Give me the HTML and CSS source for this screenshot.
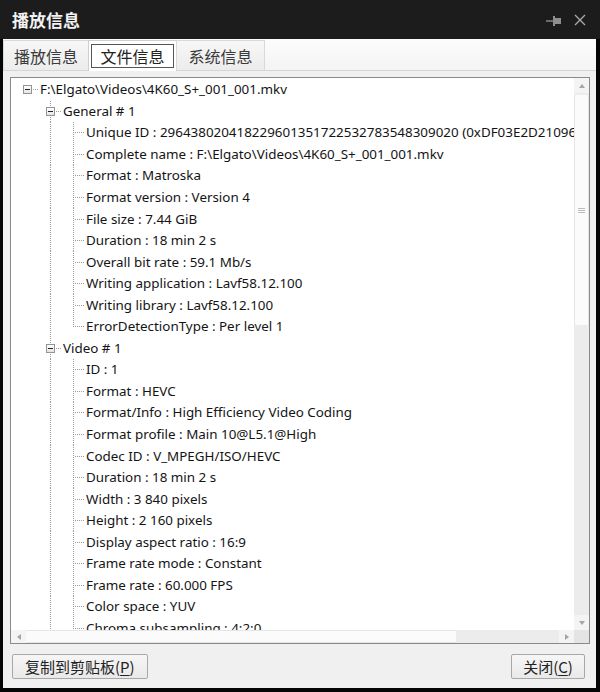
FILE: index.html
```html
<!DOCTYPE html>
<html lang="zh-CN">
<head>
<meta charset="utf-8">
<title>播放信息</title>
<link rel="stylesheet" href="styles.css">
</head>
<body>
<div class="window">
  <div class="titlebar">
    <span class="title">播放信息</span>
    <span class="tb-icons">
      <svg class="pin" width="16" height="12" viewBox="0 0 16 12"><path d="M0 6H7" stroke="#8f8f8f" stroke-width="1.4"/><rect x="7" y="1" width="2" height="10" fill="#8f8f8f"/><rect x="9" y="3" width="6" height="6" fill="#8f8f8f"/></svg>
      <svg class="close" width="12" height="12" viewBox="0 0 12 12"><path d="M1 1L11 11M11 1L1 11" stroke="#a8a8a8" stroke-width="1.4"/></svg>
    </span>
  </div>
  <div class="client">
    <div class="tabs">
      <div class="tab">播放信息</div>
      <div class="tab active"><span class="focus">文件信息</span></div>
      <div class="tab">系统信息</div>
    </div>
    <div class="panel">
      <div class="view">
        <div class="tree">
          <div class="row"><span class="c bx"><i class="box"></i></span><span class="txt">F:\Elgato\Videos\4K60_S+_001_001.mkv</span></div>
          <div class="row"><span class="c"></span><span class="c bxv"><i class="box"></i></span><span class="txt">General # 1</span></div>
          <div class="row"><span class="c"></span><span class="c v"></span><span class="c t"></span><span class="txt">Unique ID : 296438020418229601351722532783548309020 (0xDF03E2D21096163</span></div>
          <div class="row"><span class="c"></span><span class="c v"></span><span class="c t"></span><span class="txt">Complete name : F:\Elgato\Videos\4K60_S+_001_001.mkv</span></div>
          <div class="row"><span class="c"></span><span class="c v"></span><span class="c t"></span><span class="txt">Format : Matroska</span></div>
          <div class="row"><span class="c"></span><span class="c v"></span><span class="c t"></span><span class="txt">Format version : Version 4</span></div>
          <div class="row"><span class="c"></span><span class="c v"></span><span class="c t"></span><span class="txt">File size : 7.44 GiB</span></div>
          <div class="row"><span class="c"></span><span class="c v"></span><span class="c t"></span><span class="txt">Duration : 18 min 2 s</span></div>
          <div class="row"><span class="c"></span><span class="c v"></span><span class="c t"></span><span class="txt">Overall bit rate : 59.1 Mb/s</span></div>
          <div class="row"><span class="c"></span><span class="c v"></span><span class="c t"></span><span class="txt">Writing application : Lavf58.12.100</span></div>
          <div class="row"><span class="c"></span><span class="c v"></span><span class="c t"></span><span class="txt">Writing library : Lavf58.12.100</span></div>
          <div class="row"><span class="c"></span><span class="c v"></span><span class="c l"></span><span class="txt">ErrorDetectionType : Per level 1</span></div>
          <div class="row"><span class="c"></span><span class="c bxv"><i class="box"></i></span><span class="txt">Video # 1</span></div>
          <div class="row"><span class="c"></span><span class="c v"></span><span class="c t"></span><span class="txt">ID : 1</span></div>
          <div class="row"><span class="c"></span><span class="c v"></span><span class="c t"></span><span class="txt">Format : HEVC</span></div>
          <div class="row"><span class="c"></span><span class="c v"></span><span class="c t"></span><span class="txt">Format/Info : High Efficiency Video Coding</span></div>
          <div class="row"><span class="c"></span><span class="c v"></span><span class="c t"></span><span class="txt">Format profile : Main 10@L5.1@High</span></div>
          <div class="row"><span class="c"></span><span class="c v"></span><span class="c t"></span><span class="txt">Codec ID : V_MPEGH/ISO/HEVC</span></div>
          <div class="row"><span class="c"></span><span class="c v"></span><span class="c t"></span><span class="txt">Duration : 18 min 2 s</span></div>
          <div class="row"><span class="c"></span><span class="c v"></span><span class="c t"></span><span class="txt">Width : 3 840 pixels</span></div>
          <div class="row"><span class="c"></span><span class="c v"></span><span class="c t"></span><span class="txt">Height : 2 160 pixels</span></div>
          <div class="row"><span class="c"></span><span class="c v"></span><span class="c t"></span><span class="txt">Display aspect ratio : 16:9</span></div>
          <div class="row"><span class="c"></span><span class="c v"></span><span class="c t"></span><span class="txt">Frame rate mode : Constant</span></div>
          <div class="row"><span class="c"></span><span class="c v"></span><span class="c t"></span><span class="txt">Frame rate : 60.000 FPS</span></div>
          <div class="row"><span class="c"></span><span class="c v"></span><span class="c t"></span><span class="txt">Color space : YUV</span></div>
          <div class="row"><span class="c"></span><span class="c v"></span><span class="c t"></span><span class="txt">Chroma subsampling : 4:2:0</span></div>
        </div>
        <div class="vscroll">
          <span class="arrow up"></span>
          <div class="vtrack">
            <div class="vthumb"><span class="grip"></span></div>
          </div>
          <span class="arrow down"></span>
        </div>
      </div>
      <div class="hscroll">
        <span class="harrow left"></span>
        <div class="htrack"><div class="hthumb"></div></div>
        <span class="harrow right"></span>
        <span class="corner"></span>
      </div>
    </div>
    <div class="footer">
      <button class="btn">复制到剪贴板(<u>P</u>)</button>
      <button class="btn">关闭(<u>C</u>)</button>
    </div>
  </div>
</div>
</body>
</html>
```
FILE: styles.css
```css
* { box-sizing: border-box; }
html, body { margin: 0; padding: 0; background: #000; }
.window {
  width: 600px;
  height: 692px;
  background: #050505;
  padding: 0 4px 4px 3px;
  display: flex;
  flex-direction: column;
  font-family: "Noto Sans", "Noto Sans CJK SC", sans-serif;
}
.titlebar {
  height: 39px;
  flex: none;
  background: #1c1c1c;
  margin: 0 -4px 0 -3px;
  padding: 0 14px 0 12px;
  display: flex;
  align-items: center;
  justify-content: space-between;
}
.title {
  color: #f2f2f2;
  font-family: "Noto Sans CJK SC", sans-serif;
  font-size: 17px;
  font-weight: 700;
}
.tb-icons { display: flex; align-items: center; gap: 12px; }
.pin { margin-top: 2px; }
.client {
  flex: 1;
  background: #f0f0f0;
  display: flex;
  flex-direction: column;
}
.tabs {
  height: 32px;
  flex: none;
  display: flex;
  align-items: flex-end;
  padding-left: 0;
  background: linear-gradient(#fcfcfc, #f4f4f4);
  border-bottom: 1px solid #d6d6d6;
}
.tab {
  height: 30px;
  width: 86px;
  display: flex;
  align-items: center;
  justify-content: center;
  font-family: "Noto Sans CJK SC", sans-serif;
  font-size: 16px;
  color: #3a3a3a;
  border: 1px solid #d9d9d9;
  border-bottom: none;
  background: linear-gradient(#f7f7f7, #ececec);
  margin-right: -1px;
}
.tab:last-child { width: 89px; }
.tab.active {
  height: 31px;
  width: 89px;
  background: #fff;
  border-color: #cfcfcf;
  margin-bottom: -1px;
  color: #222;
}
.focus {
  border: 1px dotted #222;
  outline: 1px solid #555;
  outline-offset: -1px;
  width: 83px;
  height: 24px;
  display: flex;
  align-items: center;
  justify-content: center;
}
.panel {
  margin: 6px 6px 0 7px;
  height: 567px;
  flex: none;
  border: 1px solid #8a8a8a;
  background: #fff;
  display: flex;
  flex-direction: column;
}
.view {
  flex: 1;
  display: flex;
  min-height: 0;
}
.tree {
  flex: 1;
  min-width: 0;
  overflow: hidden;
  padding: 1px 0 0 5px;
  font-size: 13.4px;
  color: #141414;
}
.row {
  height: 21.55px;
  display: flex;
  align-items: center;
  white-space: nowrap;
}
.txt { padding-left: 1px; line-height: 21px; }
.c {
  flex: none;
  width: 23px;
  height: 100%;
  display: flex;
  align-items: center;
  justify-content: center;
  background-repeat: no-repeat;
}
.c.v {
  background-image: repeating-linear-gradient(to bottom, #9a9a9a 0 1px, transparent 1px 2px);
  background-position: 11px 0;
  background-size: 1px 100%;
}
.c.t, .c.bxv {
  background-image: repeating-linear-gradient(to bottom, #9a9a9a 0 1px, transparent 1px 2px),
                    repeating-linear-gradient(to right, #9a9a9a 0 1px, transparent 1px 2px);
  background-position: 11px 0, 13px 50%;
  background-size: 1px 100%, 9px 1px;
}
.c.l {
  background-image: repeating-linear-gradient(to bottom, #9a9a9a 0 1px, transparent 1px 2px),
                    repeating-linear-gradient(to right, #9a9a9a 0 1px, transparent 1px 2px);
  background-position: 11px 0, 13px 50%;
  background-size: 1px 50%, 9px 1px;
}
.c.bx {
  background-image: repeating-linear-gradient(to right, #9a9a9a 0 1px, transparent 1px 2px);
  background-position: 13px 50%;
  background-size: 9px 1px;
}
.box {
  width: 9px;
  height: 9px;
  border: 1px solid #949494;
  background: linear-gradient(#ffffff, #e4e4e4);
  display: flex;
  align-items: center;
  justify-content: center;
}
.box::before {
  content: "";
  width: 5px;
  height: 1px;
  background: #222;
}
.vscroll {
  width: 15px;
  flex: none;
  background: #ececec;
  display: flex;
  flex-direction: column;
}
.arrow {
  height: 15px;
  flex: none;
  display: flex;
  align-items: center;
  justify-content: center;
  background: #f4f4f4;
}
.arrow::before {
  content: "";
  border-left: 3.5px solid transparent;
  border-right: 3.5px solid transparent;
}
.arrow.up::before { border-bottom: 4px solid #a6a6a6; }
.arrow.down::before { border-top: 4px solid #a6a6a6; }
.vtrack { flex: 1; padding-top: 2px; }
.vthumb {
  height: 230px;
  background: #fbfbfb;
  border-left: 1px solid #e6e6e6;
  border-right: 1px solid #e6e6e6;
  display: flex;
  align-items: center;
  justify-content: center;
}
.grip {
  width: 7px;
  height: 5px;
  background: repeating-linear-gradient(to bottom, #bdbdbd 0 1px, transparent 1px 2px);
}
.hscroll {
  height: 13px;
  flex: none;
  display: flex;
  background: #ececec;
}
.harrow {
  width: 15px;
  flex: none;
  display: flex;
  align-items: center;
  justify-content: center;
  background: #f4f4f4;
}
.harrow::before {
  content: "";
  border-top: 3.5px solid transparent;
  border-bottom: 3.5px solid transparent;
}
.harrow.left::before { border-right: 4px solid #a6a6a6; }
.harrow.right::before { border-left: 4px solid #a6a6a6; }
.htrack { flex: 1; }
.hthumb {
  width: 430px;
  height: 100%;
  background: #fbfbfb;
  border-top: 1px solid #e6e6e6;
  border-bottom: 1px solid #e6e6e6;
}
.corner { width: 15px; flex: none; background: #e4e4e4; }
.footer {
  flex: 1;
  display: flex;
  justify-content: space-between;
  align-items: center;
  padding: 0 11px 0 9px;
}
.btn {
  height: 25px;
  padding: 0 12px;
  font-family: "Noto Sans CJK SC", sans-serif;
  font-size: 15px;
  color: #222;
  background: linear-gradient(#f6f6f6, #e9e9e9);
  border: 1px solid #a8a8a8;
  border-radius: 2px;
  display: flex;
  align-items: center;
}
.btn u { text-decoration-thickness: 1px; text-underline-offset: 2px; }
.btn:last-child { width: 74px; justify-content: center; padding: 0; }
```
